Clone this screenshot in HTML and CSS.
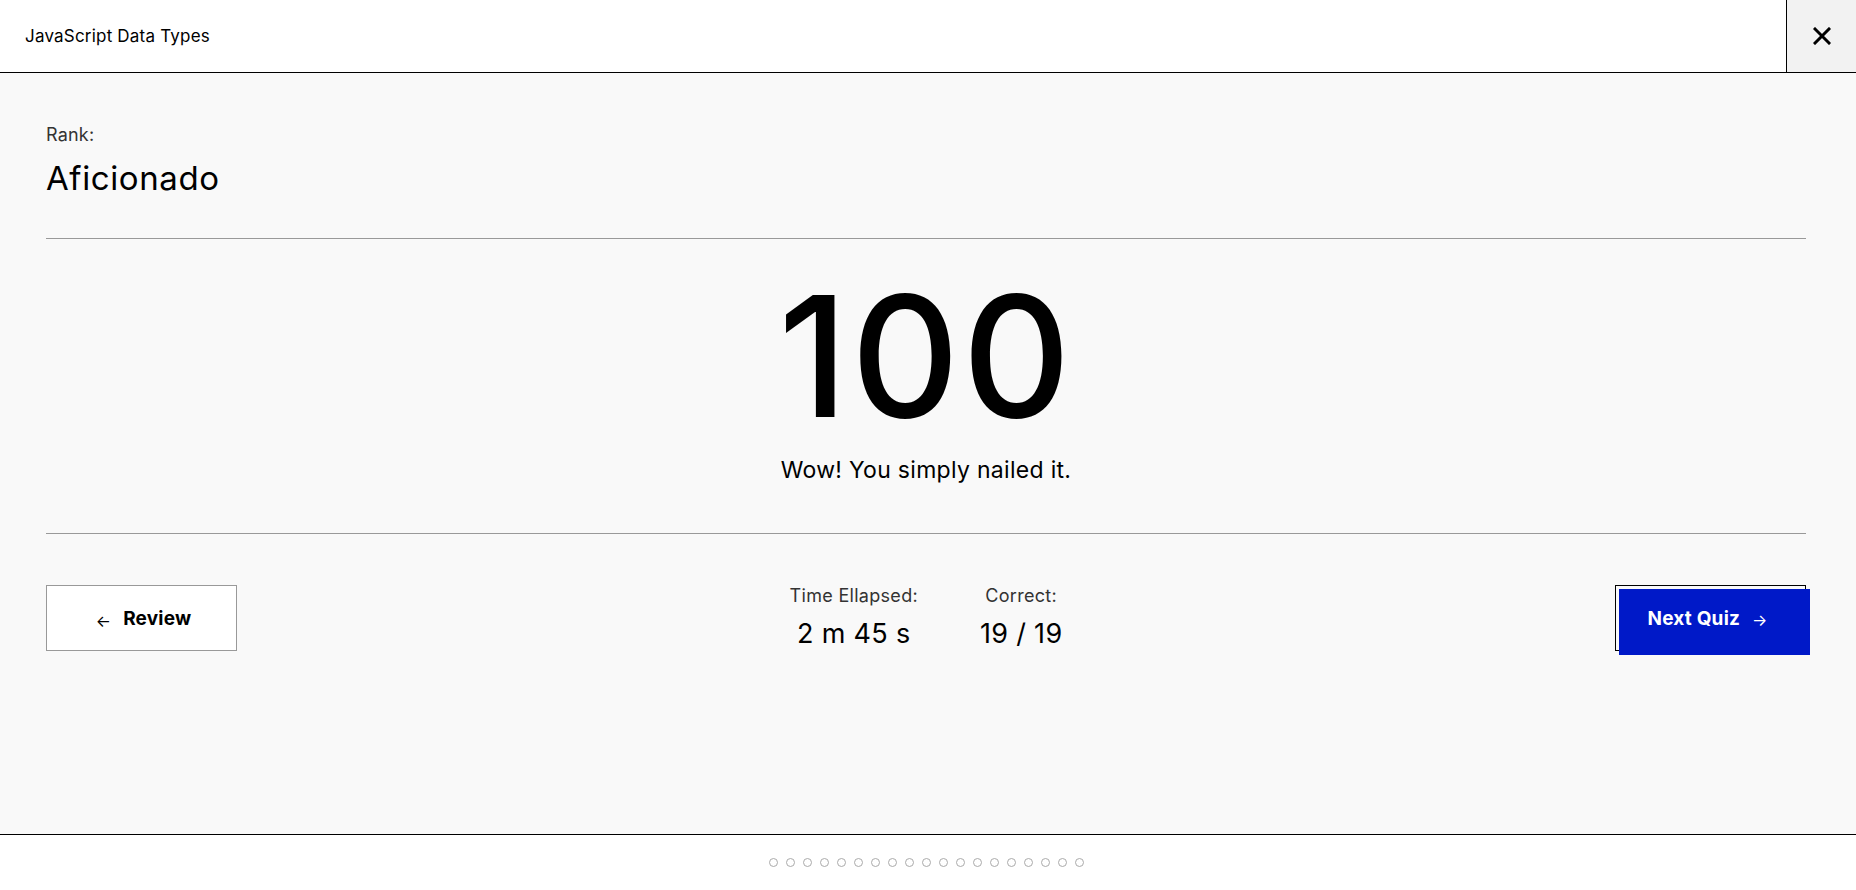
FILE: index.html
```html
<!DOCTYPE html>
<html lang="en">
<head>
<meta charset="utf-8">
<title>JavaScript Data Types</title>
<link rel="stylesheet" href="styles.css">
</head>
<body>
<div class="app">
  <header class="topbar">
    <div class="title">JavaScript Data Types</div>
    <button class="close" aria-label="Close">
      <svg width="18" height="18" viewBox="0 0 18 18"><path d="M2 2 L16 16 M16 2 L2 16" stroke="#000" stroke-width="3" stroke-linecap="square"/></svg>
    </button>
  </header>
  <main class="result">
    <section class="rank">
      <div class="rank-label">Rank:</div>
      <div class="rank-name">Aficionado</div>
    </section>
    <section class="score">
      <div class="score-num">100</div>
      <div class="score-msg">Wow! You simply nailed it.</div>
    </section>
    <section class="actions">
      <button class="btn review"><span class="arr">&larr;</span>Review</button>
      <div class="stats">
        <div class="stat">
          <div class="stat-label">Time Ellapsed:</div>
          <div class="stat-val">2 m 45 s</div>
        </div>
        <div class="stat">
          <div class="stat-label">Correct:</div>
          <div class="stat-val">19 / 19</div>
        </div>
      </div>
      <button class="btn next">Next Quiz<span class="arr">&rarr;</span></button>
    </section>
  </main>
  <footer class="dots">
    <span></span><span></span><span></span><span></span><span></span><span></span><span></span><span></span><span></span><span></span><span></span><span></span><span></span><span></span><span></span><span></span><span></span><span></span><span></span>
  </footer>
</div>
</body>
</html>
```
FILE: styles.css
```css
* { box-sizing: border-box; }
html, body { margin: 0; padding: 0; }
body {
  font-family: Inter, "Noto Sans", sans-serif;
  color: #000;
  background: #fff;
}
.app {
  height: 890px;
  display: flex;
  flex-direction: column;
}
.topbar {
  height: 73px;
  flex: none;
  display: flex;
  align-items: stretch;
  justify-content: space-between;
  border-bottom: 1px solid #000;
  background: #fff;
}
.title {
  padding-left: 25px;
  display: flex;
  align-items: center;
  font-size: 17px;
  letter-spacing: 0.2px;
}
.close {
  width: 70px;
  border: 0;
  border-left: 1px solid #000;
  background: #f2f2f2;
  display: flex;
  align-items: center;
  justify-content: center;
  padding: 0;
}
.result {
  flex: 1;
  background: #f9f9f9;
  padding: 50px 50px 0 46px;
  border-bottom: 1px solid #000;
}
.rank {
  border-bottom: 1px solid #999;
  padding-bottom: 40px;
}
.rank-label {
  font-size: 18px;
  color: #333;
  line-height: 24px;
  letter-spacing: 0.2px;
}
.rank-name {
  font-size: 33px;
  line-height: 40px;
  margin-top: 11px;
  letter-spacing: 0.6px;
}
.score {
  border-bottom: 1px solid #999;
  display: flex;
  flex-direction: column;
  align-items: center;
  padding-top: 33px;
  padding-bottom: 48px;
}
.score-num {
  font-size: 168px;
  line-height: 168px;
  font-weight: 500;
  letter-spacing: 3px;
}
.score-msg {
  font-size: 23px;
  line-height: 30px;
  margin-top: 15px;
  letter-spacing: 0.3px;
}
.actions {
  display: flex;
  align-items: center;
  justify-content: space-between;
  padding-top: 50px;
}
.btn {
  width: 191px;
  height: 66px;
  font-family: inherit;
  font-size: 19px;
  font-weight: 700;
  display: flex;
  align-items: center;
  justify-content: center;
  cursor: pointer;
  padding: 0;
  letter-spacing: 0.2px;
}
.btn .arr {
  font-weight: 400;
  font-size: 16px;
}
.review {
  background: #fff;
  border: 1px solid #999;
  color: #000;
  padding-left: 4px;
}
.review .arr { margin-right: 12px; margin-top: 6px; }
.next {
  position: relative;
  z-index: 0;
  background: transparent;
  border: 1px solid #000;
  color: #fff;
  padding-right: 6px;
}
.next::before {
  content: "";
  position: absolute;
  top: 3px; left: 3px; right: -5px; bottom: -5px;
  background: #0019c8;
  z-index: -1;
}
.next .arr { margin-left: 12px; margin-top: 3px; }
.stats {
  display: flex;
  gap: 62px;
}
.stat {
  display: flex;
  flex-direction: column;
  align-items: center;
}
.stat-label {
  font-size: 18px;
  line-height: 24px;
  color: #333;
  letter-spacing: 0.3px;
}
.stat-val {
  font-size: 27px;
  line-height: 36px;
  margin-top: 8px;
  letter-spacing: 0.3px;
}
.dots {
  height: 55px;
  flex: none;
  display: flex;
  justify-content: center;
  align-items: center;
  gap: 8px;
  padding-right: 4px;
}
.dots span {
  width: 9px;
  height: 9px;
  border: 1px solid #aaa;
  border-radius: 50%;
}
```
